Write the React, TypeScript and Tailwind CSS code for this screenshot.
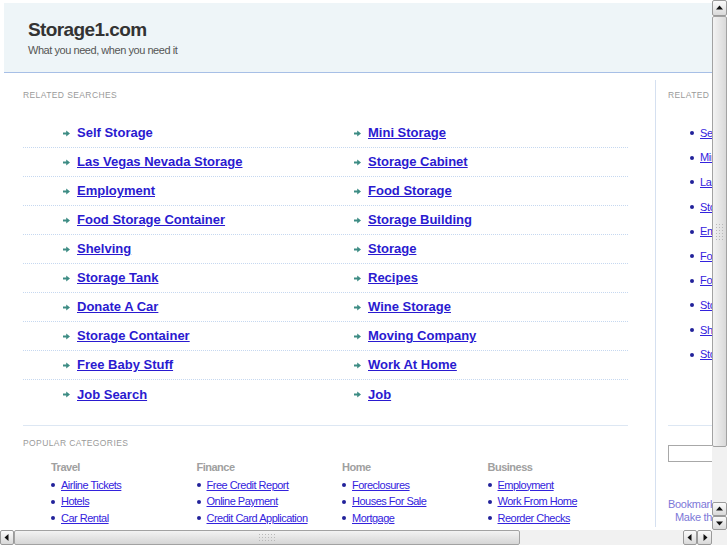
import React from 'react'

const rows: [string, string][] = [
  ['Self Storage', 'Mini Storage'],
  ['Las Vegas Nevada Storage', 'Storage Cabinet'],
  ['Employment', 'Food Storage'],
  ['Food Storage Container', 'Storage Building'],
  ['Shelving', 'Storage'],
  ['Storage Tank', 'Recipes'],
  ['Donate A Car', 'Wine Storage'],
  ['Storage Container', 'Moving Company'],
  ['Free Baby Stuff', 'Work At Home'],
  ['Job Search', 'Job'],
]

const sideLinks = [
  'Self Storage',
  'Mini Storage',
  'Las Vegas Nevada Storage',
  'Storage Cabinet',
  'Employment',
  'Food Storage',
  'Food Storage Container',
  'Storage Building',
  'Shelving',
  'Storage',
]

const categories = [
  { title: 'Travel', links: ['Airline Tickets', 'Hotels', 'Car Rental'] },
  { title: 'Finance', links: ['Free Credit Report', 'Online Payment', 'Credit Card Application'] },
  { title: 'Home', links: ['Foreclosures', 'Houses For Sale', 'Mortgage'] },
  { title: 'Business', links: ['Employment', 'Work From Home', 'Reorder Checks'] },
]

const font = { fontFamily: '"Liberation Sans", Arial, sans-serif' }

function Arrow() {
  return (
    <svg width="7" height="7" viewBox="0 0 7 7" className="mr-[7px] shrink-0">
      <path d="M0 2.6h3.2V0.4L7 3.5 3.2 6.6V4.4H0z" fill="#3d8c84" />
    </svg>
  )
}

function Tri({ dir }: { dir: 'up' | 'down' | 'left' | 'right' }) {
  const d = {
    up: 'M1 5.5L4.5 1.5 8 5.5z',
    down: 'M1 2.5h7L4.5 6.5z',
    left: 'M5.5 1L1.5 4.5 5.5 8z',
    right: 'M2.5 1v7l4-3.5z',
  }[dir]
  const size = dir === 'up' || dir === 'down' ? 'w-[9px] h-[8px]' : 'w-[8px] h-[9px]'
  const vb = dir === 'up' || dir === 'down' ? '0 0 9 8' : '0 0 8 9'
  return (
    <svg viewBox={vb} className={size}>
      <path d={d} fill="#111" />
    </svg>
  )
}

function SBtn({ dir, className }: { dir: 'up' | 'down' | 'left' | 'right'; className: string }) {
  return (
    <div
      className={`flex items-center justify-center shrink-0 border border-[#9a9a9a] rounded-[2px] bg-linear-to-b from-[#fbfbfb] to-[#d9d9d9] ${className}`}
    >
      <Tri dir={dir} />
    </div>
  )
}

const dots =
  'bg-[#f1f1f1] bg-[radial-gradient(circle,#cdcdcd_35%,transparent_40%)] bg-[length:2px_2px]'

export default function App() {
  return (
    <div className="w-[727px] h-[545px] flex flex-col overflow-hidden bg-white" style={font}>
      <div className="flex h-[530px]">
        {/* page */}
        <div className="flex-1 min-w-0 overflow-hidden">
          <div className="w-[900px] pt-[3px]">
            <div className="ml-[4px] h-[70px] bg-[#eef5f8] border-b border-[#a7bfe6] pt-[16px] pl-[24px]">
              <div className="text-[19px] leading-[22px] font-bold tracking-[-0.6px] text-[#333]">Storage1.com</div>
              <div className="mt-[3px] text-[11px] leading-[13px] tracking-[-0.45px] text-[#555]">
                What you need, when you need it
              </div>
            </div>

            <div className="flex pl-[23px]">
              {/* main column */}
              <div className="w-[605px] shrink-0 pt-[16px]">
                <div className="text-[8.5px] leading-[12px] tracking-[0.4px] text-[#9a9a9a] uppercase">Related Searches</div>
                <div className="mt-[18px]">
                  {rows.map(([a, b], i) => (
                    <div
                      key={a}
                      className={`flex items-center pl-[40px] h-[29px] ${
                        i < rows.length - 1 ? 'border-b border-dotted border-[#c6d8f0]' : ''
                      }`}
                    >
                      {[a, b].map((t, j) => (
                        <div key={t} className={`flex items-center ${j === 0 ? 'w-[291px] shrink-0' : ''}`}>
                          <Arrow />
                          <a
                            href="#"
                            className={`text-[13px] leading-[16px] font-bold text-[#2a1ad0] ${
                              i === 0 && j === 0 ? 'no-underline' : 'underline'
                            }`}
                          >
                            {t}
                          </a>
                        </div>
                      ))}
                    </div>
                  ))}
                </div>

                <div className="mt-[16px] border-t border-[#dde7f3] pt-[11px]">
                  <div className="text-[8.5px] leading-[12px] tracking-[0.4px] text-[#9a9a9a] uppercase">Popular Categories</div>
                  <div className="flex mt-[12px] pl-[28px]">
                    {categories.map((c) => (
                      <div key={c.title} className="w-[145.5px] shrink-0">
                        <div className="text-[11px] leading-[13px] font-bold tracking-[-0.5px] text-[#a0a0a0]">{c.title}</div>
                        <div className="mt-[3px]">
                          {c.links.map((l) => (
                            <div key={l} className="flex items-center h-[16.5px]">
                              <span className="w-[4px] h-[4px] rounded-full bg-[#22229a] mr-[6px]" />
                              <a href="#" className="text-[11px] leading-[13px] tracking-[-0.5px] text-[#3322dd] underline whitespace-nowrap">
                                {l}
                              </a>
                            </div>
                          ))}
                        </div>
                      </div>
                    ))}
                  </div>
                </div>
              </div>

              {/* side column */}
              <div className="ml-[27px] mt-[7px] border-l border-[#d5e0f0] pl-[12px] pt-[9px] w-[220px] shrink-0">
                <div className="text-[8.5px] leading-[12px] tracking-[0.4px] text-[#9a9a9a] uppercase">Related Searches</div>
                <div className="mt-[20px] pl-[22px]">
                  {sideLinks.map((l) => (
                    <div key={l} className="flex items-center h-[24.6px]">
                      <span className="w-[4px] h-[4px] rounded-full bg-[#22229a] mr-[6px]" />
                      <a href="#" className="text-[11px] leading-[13px] tracking-[-0.3px] text-[#3322dd] underline whitespace-nowrap">
                        {l}
                      </a>
                    </div>
                  ))}
                </div>
                <div className="mt-[58px] border-t border-[#dde7f3]" />
                <div className="mt-[19px] h-[17px] w-[160px] border border-[#a8a8a8] bg-white" />
                <div className="mt-[36px] text-[11px] leading-[13px] tracking-[-0.3px] text-[#7d78d8]">Bookmark this page</div>
                <div className="pl-[7px] text-[11px] leading-[13px] tracking-[-0.3px] text-[#7d78d8]">Make this your homepage</div>
              </div>
            </div>
          </div>
        </div>

        {/* vertical scrollbar */}
        <div className="w-[15px] flex flex-col">
          <SBtn dir="up" className="h-[16px]" />
          <div className="h-[431px] shrink-0 border border-[#a2a2a2] rounded-[2px] bg-linear-to-r from-[#f3f3f3] to-[#d9d9d9] flex items-center justify-center">
            <div className="w-[9px] h-[17px] bg-[radial-gradient(circle,#b8b8b8_35%,transparent_40%)] bg-[length:3px_3px]" />
          </div>
          <div className={`flex-1 ${dots}`} />
          <SBtn dir="up" className="h-[14px]" />
          <SBtn dir="down" className="h-[14px]" />
        </div>
      </div>

      {/* horizontal scrollbar */}
      <div className="flex h-[15px]">
        <SBtn dir="left" className="w-[14px]" />
        <div className="w-[506px] shrink-0 border border-[#a2a2a2] rounded-[2px] bg-linear-to-b from-[#f3f3f3] to-[#d6d6d6] flex items-center justify-center">
          <div className="w-[18px] h-[9px] bg-[radial-gradient(circle,#b8b8b8_35%,transparent_40%)] bg-[length:3px_3px]" />
        </div>
        <div className={`w-[163px] shrink-0 ${dots}`} />
        <SBtn dir="left" className="w-[14px]" />
        <SBtn dir="right" className="w-[15px]" />
        <div className={`w-[15px] shrink-0 ${dots}`} />
      </div>
    </div>
  )
}
